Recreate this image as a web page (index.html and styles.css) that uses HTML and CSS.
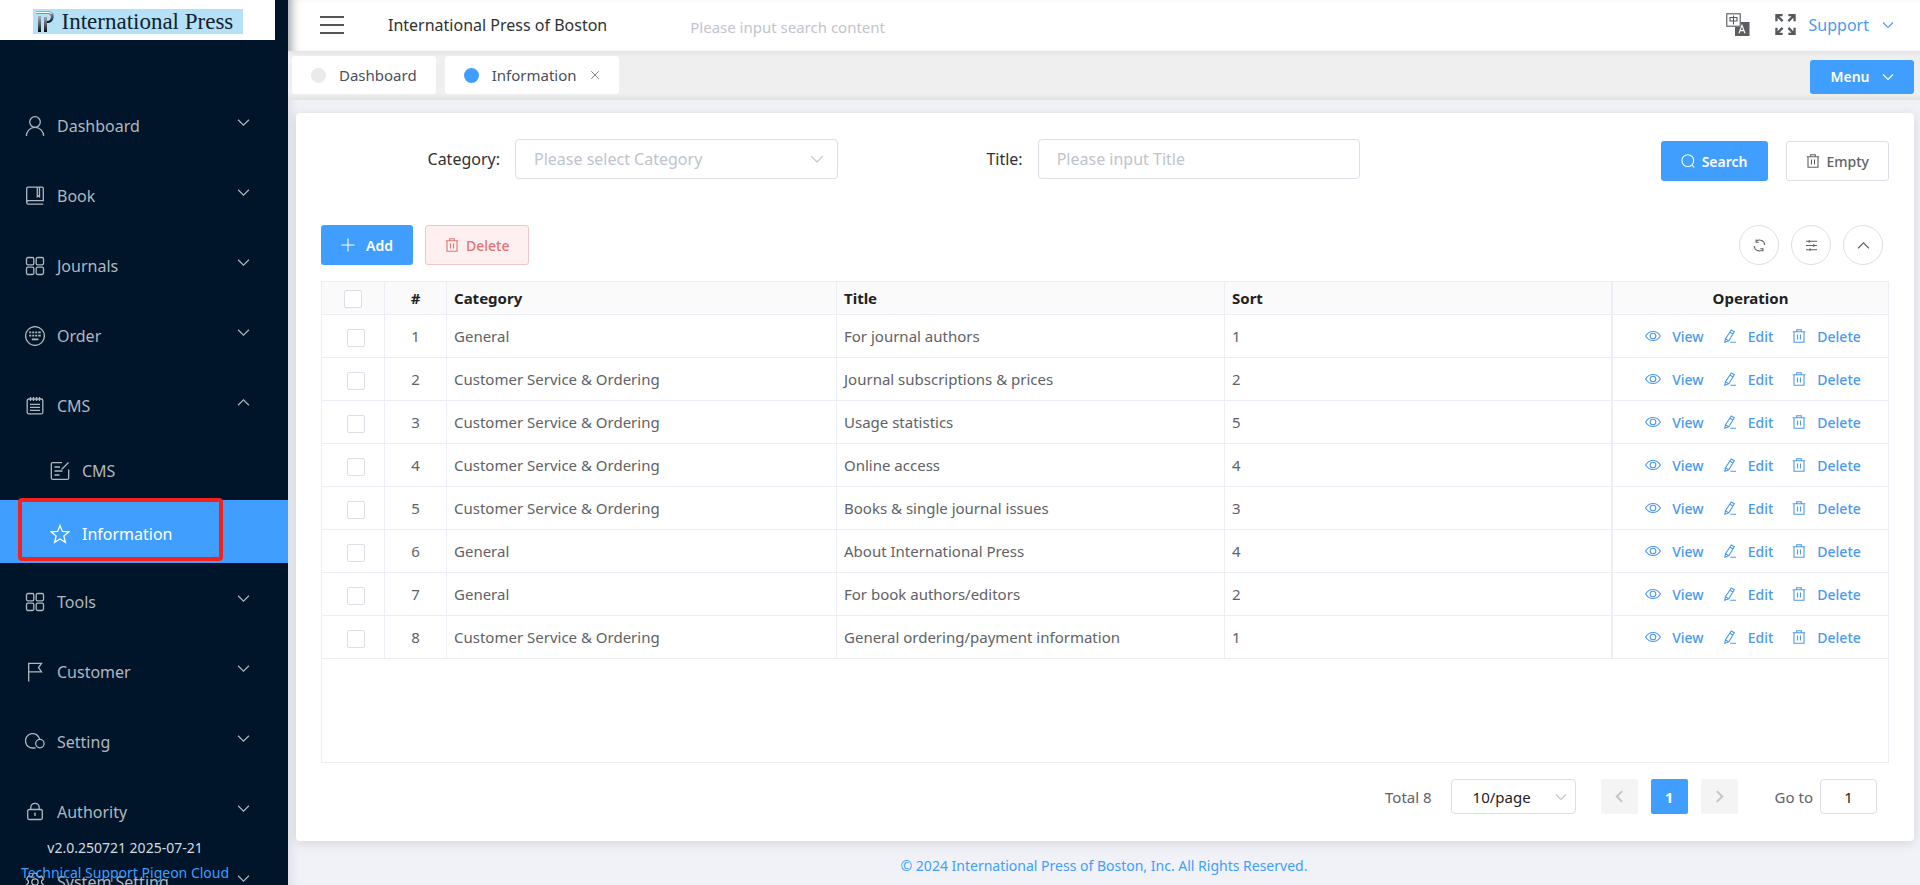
FILE: index.html
```html
<!DOCTYPE html>
<html lang="en">
<head>
<meta charset="utf-8">
<title>International Press of Boston</title>
<link rel="stylesheet" href="styles.css">
</head>
<body>
<svg class="sprite" aria-hidden="true">
  <symbol id="down" viewBox="0 0 12 12"><path d="M1 3.5l5 5 5-5"/></symbol>
  <symbol id="up" viewBox="0 0 12 12"><path d="M1 8.5l5-5 5 5"/></symbol>
  <symbol id="left" viewBox="0 0 12 12"><path d="M8.5 1l-5 5 5 5"/></symbol>
  <symbol id="right" viewBox="0 0 12 12"><path d="M3.5 1l5 5-5 5"/></symbol>
  <symbol id="close" viewBox="0 0 12 12"><path d="M1.500 1.500l9 9M10.500 1.500l-9 9"/></symbol>
  <symbol id="user" viewBox="0 0 20 20"><circle cx="10" cy="6" r="5.300"/><path d="M1.400 20a8.600 8.700 0 0 1 17.200 0"/></symbol>
  <symbol id="book" viewBox="0 0 20 20"><path d="M18.300 18.200H3.300a1.600 1.600 0 0 1-1.600-1.600V2.300a1.200 1.200 0 0 1 1.200-1.200h14.200a1.200 1.200 0 0 1 1.200 1.200v12.400H3.600a1.700 1.700 0 0 0-1.800 1.700M12.300 1.100v9.700l1.100-.8 1.100.8V1.100"/></symbol>
  <symbol id="grid" viewBox="0 0 20 20"><rect x="1.500" y="1.500" width="7.300" height="7.300" rx="1.400"/><rect x="11.200" y="1.500" width="7.300" height="7.300" rx="1.400"/><rect x="1.500" y="11.200" width="7.300" height="7.300" rx="1.400"/><rect x="11.200" y="11.200" width="7.300" height="7.300" rx="1.400"/></symbol>
  <symbol id="order" viewBox="0 0 20 20"><circle cx="10" cy="10" r="9.400"/><path stroke-width="1.800" d="M4.200 6.400h2M7.200 6.400h2M10.200 6.400h2M13.200 6.400h2.600M4.200 9.700h2M7.200 9.700h2M10.200 9.700h2M13.200 9.700h2.600M6.800 13.300h6.600"/></symbol>
  <symbol id="notes" viewBox="0 0 20 20"><rect x="2.200" y="3" width="15.600" height="14.800" rx="1.500"/><path d="M5.500 1v4M8.500 1v4M11.500 1v4M14.500 1v4M5 8.300h10M5 11.300h10M5 14.300h10"/></symbol>
  <symbol id="note-edit" viewBox="0 0 20 20"><path d="M12 1.600H2.800a1.500 1.500 0 0 0-1.500 1.500v13.800a1.500 1.500 0 0 0 1.500 1.500h14.400a1.500 1.500 0 0 0 1.500-1.500V8.500M4.500 6h5.500M4.500 10h8M4.500 14h5M18.500 1.500l-7 7"/></symbol>
  <symbol id="star" viewBox="0 0 20 20"><path d="M10 1.500l2.400 5.900 6.400.500-4.900 4.100 1.500 6.300L10 14.900l-5.400 3.400 1.500-6.300L1.200 7.900l6.400-.500z"/></symbol>
  <symbol id="flag" viewBox="0 0 20 20"><path d="M3.700 19.500V1.300h12.800l-3 4.300 3 4.300H3.700"/></symbol>
  <symbol id="setting" viewBox="0 0 20 20"><path d="M10.500 16H7.800A7.200 7.200 0 1 1 14.700 7.200"/><circle cx="14.900" cy="11.600" r="4.200"/></symbol>
  <symbol id="lock" viewBox="0 0 20 20"><rect x="2.700" y="7.500" width="14.600" height="10" rx="1.500"/><path d="M5.800 7.500V5.500a4.200 4.200 0 0 1 8.400 0v2M10 11v3M9.200 11.500h1.600"/></symbol>
  <symbol id="gear" viewBox="0 0 20 20"><path d="M8.200 1.300h3.600l.6 2.500 1.700 1 2.500-.8 1.800 3.100-1.800 1.900v2l1.800 1.900-1.800 3.100-2.500-.8-1.700 1-.6 2.500H8.200l-.6-2.500-1.700-1-2.500.8-1.800-3.100 1.800-1.900V9L1.600 7.100 3.400 4l2.500.8 1.700-1z"/><circle cx="10" cy="10" r="3.200"/></symbol>
  <symbol id="search" viewBox="0 0 14 14"><circle cx="6.800" cy="6.600" r="5.900"/><path d="M10.800 10.800l2.500 2.700"/></symbol>
  <symbol id="trash" viewBox="0 0 14 14"><path d="M.7 2.700h12.600M4.700 2.500V.7h4.600v1.800M2 2.700v10.600h10V2.700M5.500 5.500v5M8.500 5.500v5"/></symbol>
  <symbol id="plus" viewBox="0 0 14 14"><path d="M7 .5v13M.5 7h13"/></symbol>
  <symbol id="refresh" viewBox="0 0 14 14"><path d="M3.300 2.500A5.700 5.700 0 0 1 12.700 6.500M10.700 11.500A5.700 5.700 0 0 1 1.300 7.500M3.300.6v2.900h2.900M10.700 13.400v-2.900H7.800"/></symbol>
  <symbol id="sliders" viewBox="0 0 14 14"><path d="M1 2.500h12M1 7h12M1 11.500h12M4.500 1v3M9.500 5.500v3M5.500 10v3"/></symbol>
  <symbol id="eye" viewBox="0 0 16 14"><path d="M.6 7C4 1 12 1 15.400 7 12 13 4 13 .6 7z"/><circle cx="8" cy="7" r="2.800"/></symbol>
  <symbol id="pen" viewBox="0 0 14 14"><path d="M8.300 1l3 1.700-5.500 9.100-4 1.400.7-3.600zM7 3.200l3 1.700M2.300 9.700l3.200 1.900M7.300 13.300H13"/></symbol>
  <symbol id="lang" viewBox="0 0 24 24"><rect x=".8" y=".8" width="13.400" height="12.400"/><path d="M4 4.500h7v3.500H4zM7.500 2.500V11.500"/><path class="solid" d="M14.800 9H23.500V23H9V14h5.800z"/><path class="light" d="M13 20.300l3-8 3 8M14 17.600h4"/></symbol>
  <symbol id="expand" viewBox="0 0 22 22"><path d="M8 1.200H1.500V7.500M2 1.500l6 6M14 1.200h6.500V7.500M20 1.500l-6 6M8 20.800H1.500V14.500M2 20.500l6-6M14 20.800h6.500V14.500M20 20.500l-6-6"/></symbol>
</svg>

<div class="app">
  <aside class="sidebar">
    <div class="brand">
      <div class="brand-plate">
        <svg class="brand-mark" viewBox="0 0 20 23" aria-hidden="true">
          <defs><linearGradient id="metal" x1="0" y1="0" x2="0" y2="1"><stop offset="0" stop-color="#a9b1b6"/><stop offset=".5" stop-color="#59636b"/><stop offset="1" stop-color="#05090d"/></linearGradient></defs>
          <path fill="url(#metal)" d="M3 6h3v16H3zM9 7h3v15H9z"/>
          <path fill="url(#metal)" d="M1 1h13c7 0 6 12-1 12h-1v-2c5 0 5-7 1-7H1z"/>
          <path fill="#f5fafc" d="M1 2h13c2 0 3 1 3 2l-3-1H1z"/>
        </svg>
        <span>International Press</span>
      </div>
    </div>
    <nav class="nav">
      <button class="nav-item"><span class="nav-label"><svg><use href="#user"/></svg>Dashboard</span><svg class="caret"><use href="#down"/></svg></button>
      <button class="nav-item"><span class="nav-label"><svg><use href="#book"/></svg>Book</span><svg class="caret"><use href="#down"/></svg></button>
      <button class="nav-item"><span class="nav-label"><svg><use href="#grid"/></svg>Journals</span><svg class="caret"><use href="#down"/></svg></button>
      <button class="nav-item"><span class="nav-label"><svg><use href="#order"/></svg>Order</span><svg class="caret"><use href="#down"/></svg></button>
      <button class="nav-item"><span class="nav-label"><svg><use href="#notes"/></svg>CMS</span><svg class="caret"><use href="#up"/></svg></button>
      <a class="nav-sub" href="#"><span class="nav-label"><svg><use href="#note-edit"/></svg>CMS</span></a>
      <a class="nav-sub active" href="#"><span class="nav-label"><svg><use href="#star"/></svg>Information</span></a>
      <button class="nav-item"><span class="nav-label"><svg><use href="#grid"/></svg>Tools</span><svg class="caret"><use href="#down"/></svg></button>
      <button class="nav-item"><span class="nav-label"><svg><use href="#flag"/></svg>Customer</span><svg class="caret"><use href="#down"/></svg></button>
      <button class="nav-item"><span class="nav-label"><svg><use href="#setting"/></svg>Setting</span><svg class="caret"><use href="#down"/></svg></button>
      <button class="nav-item"><span class="nav-label"><svg><use href="#lock"/></svg>Authority</span><svg class="caret"><use href="#down"/></svg></button>
      <button class="nav-item"><span class="nav-label"><svg><use href="#gear"/></svg>System Setting</span><svg class="caret"><use href="#down"/></svg></button>
    </nav>
    <div class="version"><span>v2.0.250721 2025-07-21</span><a href="#">Technical Support Pigeon Cloud</a></div>
  </aside>

  <div class="main">
    <header class="topbar">
      <button class="burger" aria-label="Toggle menu"><i></i><i></i><i></i></button>
      <span class="site">International Press of Boston</span>
      <input class="top-search" type="text" aria-label="Search content" placeholder="Please input search content">
      <button class="icon-btn" aria-label="Language"><svg class="lang"><use href="#lang"/></svg></button>
      <button class="icon-btn" aria-label="Full screen"><svg class="expand"><use href="#expand"/></svg></button>
      <button class="account">Support<svg><use href="#down"/></svg></button>
    </header>
    <div class="tabs">
      <a class="tab" href="#"><i class="dot"></i>Dashboard</a>
      <a class="tab current" href="#"><i class="dot"></i>Information<svg><use href="#close"/></svg></a>
      <button class="menu-btn">Menu<svg><use href="#down"/></svg></button>
    </div>

    <main class="card">
      <form class="filters">
        <div class="field"><label for="category">Category:</label><div class="select"><select id="category"><option>Please select Category</option></select><svg><use href="#down"/></svg></div></div>
        <div class="field"><label for="title">Title:</label><input id="title" type="text" placeholder="Please input Title"></div>
        <div class="form-actions">
          <button type="button" class="btn primary"><svg><use href="#search"/></svg>Search</button>
          <button type="button" class="btn plain"><svg><use href="#trash"/></svg>Empty</button>
        </div>
      </form>
      <div class="toolbar">
        <button class="btn primary add"><svg><use href="#plus"/></svg>Add</button>
        <button class="btn danger"><svg><use href="#trash"/></svg>Delete</button>
        <div class="tools">
          <button class="round" aria-label="Refresh"><svg><use href="#refresh"/></svg></button>
          <button class="round" aria-label="Columns"><svg><use href="#sliders"/></svg></button>
          <button class="round" aria-label="Collapse"><svg><use href="#up"/></svg></button>
        </div>
      </div>
      <div class="table-box">
        <table>
          <colgroup><col class="c-check"><col class="c-num"><col class="c-cat"><col><col><col class="c-op"></colgroup>
          <thead><tr><th class="mid"><input type="checkbox" aria-label="Select all"></th><th class="mid">#</th><th>Category</th><th>Title</th><th class="last-data">Sort</th><th class="mid">Operation</th></tr></thead>
          <tbody>
            <tr><td class="pick"><input type="checkbox" aria-label="Select row 1"></td><td class="mid">1</td><td>General</td><td>For journal authors</td><td class="last-data">1</td><td><div class="ops"><a href="#"><svg class="eye"><use href="#eye"/></svg>View</a><a href="#"><svg><use href="#pen"/></svg>Edit</a><a href="#"><svg><use href="#trash"/></svg>Delete</a></div></td></tr>
            <tr><td class="pick"><input type="checkbox" aria-label="Select row 2"></td><td class="mid">2</td><td>Customer Service &amp; Ordering</td><td>Journal subscriptions &amp; prices</td><td class="last-data">2</td><td><div class="ops"><a href="#"><svg class="eye"><use href="#eye"/></svg>View</a><a href="#"><svg><use href="#pen"/></svg>Edit</a><a href="#"><svg><use href="#trash"/></svg>Delete</a></div></td></tr>
            <tr><td class="pick"><input type="checkbox" aria-label="Select row 3"></td><td class="mid">3</td><td>Customer Service &amp; Ordering</td><td>Usage statistics</td><td class="last-data">5</td><td><div class="ops"><a href="#"><svg class="eye"><use href="#eye"/></svg>View</a><a href="#"><svg><use href="#pen"/></svg>Edit</a><a href="#"><svg><use href="#trash"/></svg>Delete</a></div></td></tr>
            <tr><td class="pick"><input type="checkbox" aria-label="Select row 4"></td><td class="mid">4</td><td>Customer Service &amp; Ordering</td><td>Online access</td><td class="last-data">4</td><td><div class="ops"><a href="#"><svg class="eye"><use href="#eye"/></svg>View</a><a href="#"><svg><use href="#pen"/></svg>Edit</a><a href="#"><svg><use href="#trash"/></svg>Delete</a></div></td></tr>
            <tr><td class="pick"><input type="checkbox" aria-label="Select row 5"></td><td class="mid">5</td><td>Customer Service &amp; Ordering</td><td>Books &amp; single journal issues</td><td class="last-data">3</td><td><div class="ops"><a href="#"><svg class="eye"><use href="#eye"/></svg>View</a><a href="#"><svg><use href="#pen"/></svg>Edit</a><a href="#"><svg><use href="#trash"/></svg>Delete</a></div></td></tr>
            <tr><td class="pick"><input type="checkbox" aria-label="Select row 6"></td><td class="mid">6</td><td>General</td><td>About International Press</td><td class="last-data">4</td><td><div class="ops"><a href="#"><svg class="eye"><use href="#eye"/></svg>View</a><a href="#"><svg><use href="#pen"/></svg>Edit</a><a href="#"><svg><use href="#trash"/></svg>Delete</a></div></td></tr>
            <tr><td class="pick"><input type="checkbox" aria-label="Select row 7"></td><td class="mid">7</td><td>General</td><td>For book authors/editors</td><td class="last-data">2</td><td><div class="ops"><a href="#"><svg class="eye"><use href="#eye"/></svg>View</a><a href="#"><svg><use href="#pen"/></svg>Edit</a><a href="#"><svg><use href="#trash"/></svg>Delete</a></div></td></tr>
            <tr><td class="pick"><input type="checkbox" aria-label="Select row 8"></td><td class="mid">8</td><td>Customer Service &amp; Ordering</td><td>General ordering/payment information</td><td class="last-data">1</td><td><div class="ops"><a href="#"><svg class="eye"><use href="#eye"/></svg>View</a><a href="#"><svg><use href="#pen"/></svg>Edit</a><a href="#"><svg><use href="#trash"/></svg>Delete</a></div></td></tr>
          </tbody>
        </table>
      </div>
      <div class="pager">
        <span class="total">Total 8</span>
        <div class="select size"><select aria-label="Page size"><option>10/page</option></select><svg><use href="#down"/></svg></div>
        <div class="pages">
          <button class="page" disabled aria-label="Previous"><svg><use href="#left"/></svg></button>
          <button class="page on">1</button>
          <button class="page" disabled aria-label="Next"><svg><use href="#right"/></svg></button>
        </div>
        <label for="goto">Go to</label><input id="goto" type="text" value="1">
      </div>
    </main>
    <footer class="foot"><a href="#">© 2024 International Press of Boston, Inc. All Rights Reserved.</a></footer>
  </div>
</div>
</body>
</html>
```
FILE: styles.css
```css
*, *::after { box-sizing: border-box; }
body, button, input, select { font-family: "Noto Sans", "Open Sans", sans-serif; font-size: 15px; }
body { margin: 0; color: #303133; background: #f0f2f7; }
button { border: 0; background: none; padding: 0; margin: 0; cursor: pointer; color: inherit; }
a { text-decoration: none; color: inherit; }
input { margin: 0; outline: 0; }
svg { fill: none; stroke: currentColor; stroke-width: 1.1; flex: none; }
.sprite { display: none; }

.app { display: flex; height: 100vh; overflow: hidden; }

.sidebar { position: relative; flex: none; width: 288px; overflow: hidden; background: #001529; color: #b0b7be; }
.brand { display: flex; align-items: center; justify-content: center; width: 275px; height: 40px; padding-top: 3px; background: #fff; }
.brand-plate { display: flex; align-items: center; gap: 7px; width: 210px; height: 25px; padding-left: 2px; background: #b5e0f6; color: #10222e; font-family: "Liberation Serif", serif; font-size: 23px; line-height: 24px; white-space: nowrap; }
.brand-mark { width: 20px; height: 23px; stroke: none; }
.nav { display: flex; flex-direction: column; padding-top: 47px; }
.nav-item { display: flex; align-items: center; justify-content: space-between; flex: none; height: 70px; padding: 0 38px 0 25px; font-size: 16px; }
.nav-label { display: flex; align-items: center; gap: 12px; padding-top: 7px; }
.nav-label svg { width: 20px; height: 20px; stroke-width: 1.3; }
.nav-item .caret { width: 13px; height: 13px; }
.nav-sub { display: flex; align-items: center; flex: none; height: 63px; padding-left: 50px; font-size: 16px; }
.nav-sub .nav-label { padding-top: 4px; }
.nav-sub.active { position: relative; background: #409eff; color: #fff; }
.nav-sub.active::after { content: ""; position: absolute; left: 18px; top: -2px; width: 205px; height: 63px; border: 4px solid #f5221b; border-radius: 4px; }
.version { position: absolute; left: 0; bottom: 0; width: 250px; height: 50px; display: flex; flex-direction: column; align-items: center; color: #d5dbe1; font-size: 14px; line-height: 25px; white-space: nowrap; }
.version a { color: #409eff; }

.main { flex: 1; min-width: 0; display: flex; flex-direction: column; box-shadow: inset 8px 0 8px -4px rgba(0, 21, 41, .08); }
.topbar { flex: none; display: flex; align-items: center; height: 51px; padding: 0 26px 2px 32px; background: #fff; color: #303133; box-shadow: inset 10px 0 8px -6px rgba(0, 21, 41, .35); }
.burger { display: flex; flex-direction: column; gap: 6px; width: 24px; }
.burger i { height: 2px; background: #555; }
.site { margin-left: 44px; font-size: 16px; white-space: nowrap; }
.top-search { flex: 1; min-width: 0; margin-left: 83px; padding: 4px 0 0; border: 0; background: none; }
::placeholder { color: #c0c4cc; opacity: 1; }
.icon-btn { display: flex; margin-right: 25px; color: #55585c; }
.icon-btn + .icon-btn { margin-right: 13px; }
.lang { width: 24px; height: 24px; }
.solid { fill: #5a5e62; stroke: none; }
.light { stroke: #fff; }
.expand { width: 21px; height: 21px; stroke-width: 2.4; }
.account { display: flex; align-items: center; gap: 13px; color: #4a9af0; font-size: 16px; }
.account svg { width: 12px; height: 12px; }

.tabs { flex: none; display: flex; align-items: center; gap: 9px; height: 49px; padding: 0 6px 1px 4px; background: linear-gradient(#e4e4e4, #efefef 5px, #efefef 43px, #e2e2e2); }
.tab { display: flex; align-items: center; height: 38px; padding: 0 19px; border-radius: 3px; background: #fff; color: #495060; }
.dot { width: 15px; height: 15px; margin-right: 13px; border-radius: 50%; background: #e8eaec; }
.tab.current .dot { background: #409eff; }
.tab svg { width: 10px; height: 10px; margin-left: 13px; color: #777; }
.menu-btn { display: flex; align-items: center; justify-content: center; gap: 12px; width: 104px; height: 34px; margin: 3px 0 0 auto; border-radius: 3px; background: #409eff; color: #fff; font-size: 14px; font-weight: 600; }
.menu-btn svg { width: 12px; height: 12px; }

.card { flex: 1; min-height: 0; display: flex; flex-direction: column; margin: 13px 6px 0 8px; padding: 26px 25px 27px; border-radius: 4px; background: #fff; box-shadow: 0 2px 12px rgba(0, 0, 0, .12); }
.filters { display: grid; grid-template-columns: repeat(3, 1fr); height: 42px; margin-bottom: 44px; }
.field { display: flex; align-items: center; height: 40px; padding-right: 6px; font-size: 16px; }
.field label { flex: none; width: 194px; padding-right: 15px; text-align: right; }
.field input, .select select { flex: 1; min-width: 0; width: 100%; height: 40px; padding: 0 18px; border: 1px solid #dcdfe6; border-radius: 4px; background: #fff; font-size: 16px; }
.select { position: relative; flex: 1; }
.select select { appearance: none; color: #c0c4cc; }
.select svg { position: absolute; right: 14px; top: 50%; width: 14px; height: 14px; margin-top: -7px; color: #c0c4cc; pointer-events: none; }
.form-actions { display: flex; justify-content: flex-end; gap: 18px; padding-top: 2px; }
.btn { display: flex; align-items: center; justify-content: center; gap: 7px; height: 40px; padding: 0 19px; border: 1px solid transparent; border-radius: 3px; font-size: 14px; font-weight: 500; }
.btn svg { width: 14px; height: 14px; }
.primary { background: #409eff; color: #fff; font-weight: 600; }
.plain { border-color: #dcdfe6; color: #606266; }
.danger { border-color: #f5c4c4; background: #fef0f0; color: #e57373; }
.toolbar { display: flex; gap: 12px; margin-bottom: 16px; }
.add { gap: 11px; }
.tools { display: flex; gap: 12px; margin: 0 6px 0 auto; }
.round { display: grid; place-items: center; width: 40px; height: 40px; border: 1px solid #dcdfe6; border-radius: 50%; color: #606266; }
.round svg { width: 13px; height: 13px; }

.table-box { flex: 1; min-height: 0; border: 1px solid #ebeef5; }
table { width: 100%; table-layout: fixed; border-collapse: separate; border-spacing: 0; color: #606266; }
.c-check { width: 63px; }
.c-num { width: 62px; }
.c-cat { width: 390px; }
.c-op { width: 275px; }
th, td { height: 43px; padding: 0 6px 0 7px; border: 0 solid #ebeef5; border-width: 0 1px 1px 0; text-align: left; white-space: nowrap; }
th { height: 33px; background: #fafafa; color: #222; font-weight: 700; }
th:last-child, td:last-child { border-right: 0; }
.last-data { border-right-width: 2px; }
.mid { padding: 0; text-align: center; }
.pick { padding: 2px 0 0 25px; }
input[type=checkbox] { appearance: none; display: inline-block; width: 18px; height: 18px; border: 1px solid #dcdfe6; border-radius: 2px; background: #fff; vertical-align: middle; }
.ops { display: flex; justify-content: center; gap: 19px; padding-left: 4px; color: #4a9af0; font-size: 14px; font-weight: 500; }
.ops a { display: flex; align-items: center; gap: 11px; }
.ops svg { width: 14px; height: 14px; }
.ops .eye { width: 16px; }

.pager { display: flex; align-items: center; justify-content: flex-end; margin-top: 16px; padding-right: 12px; color: #606266; }
.select.size { flex: none; width: 125px; margin: 0 25px 0 19px; }
.size select { height: 35px; padding: 0 21px; color: #222; font-size: 15px; }
.size svg { right: 9px; width: 12px; height: 12px; margin-top: -6px; }
.pages { display: flex; gap: 13px; margin-right: 37px; }
.page { display: grid; place-items: center; width: 37px; height: 35px; border-radius: 2px; background: #f4f4f5; color: #c0c4cc; font-weight: 700; }
.page svg { width: 13px; height: 13px; stroke-width: 1.8; }
.page.on { background: #409eff; color: #fff; }
#goto { width: 57px; height: 35px; margin-left: 7px; padding: 0; border: 1px solid #dcdfe6; border-radius: 4px; text-align: center; color: #222; }
.foot { flex: none; height: 44px; padding-top: 13px; text-align: center; color: #409eff; font-size: 14px; line-height: 24px; }
```
